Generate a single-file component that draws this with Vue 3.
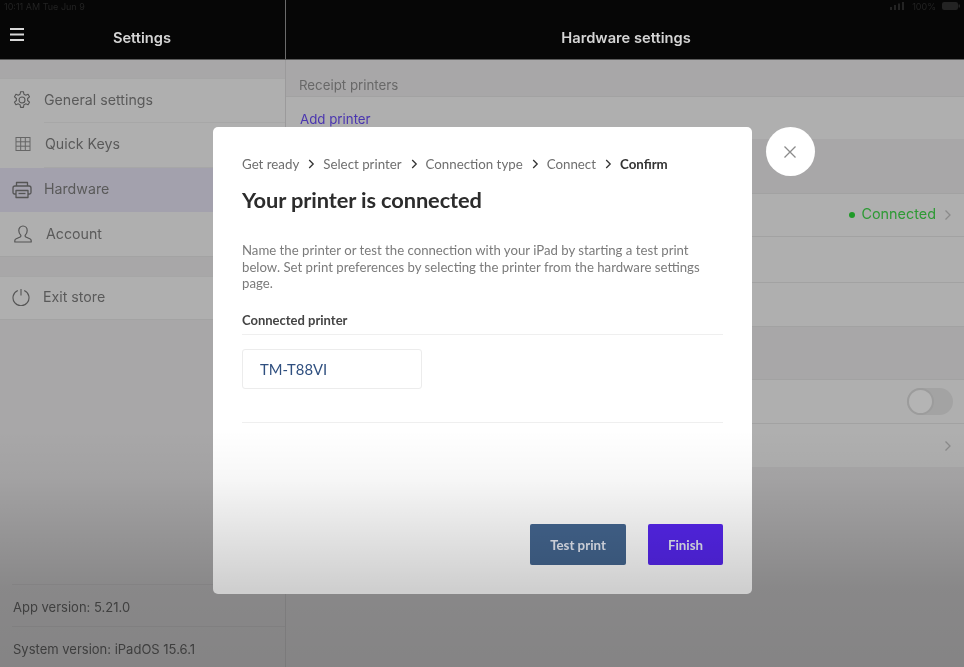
<script setup>
const steps = ['Get ready', 'Select printer', 'Connection type', 'Connect']
</script>

<template>
  <div class="screen">
    <header class="top">
      <div class="top-left">
        <span class="status status-left">10:11 AM Tue Jun 9</span>
        <svg class="burger" width="16" height="16" viewBox="0 0 16 16"><path d="M1 2h14M1 7.500h14M1 13h14" stroke="#d8d8d8" stroke-width="2"/></svg>
        <span class="top-title">Settings</span>
      </div>
      <div class="top-right">
        <div class="status status-right">
          <svg width="16" height="8" viewBox="0 0 16 8" fill="#232323"><rect x="0" y="5" width="2" height="3"/><rect x="4" y="3" width="2" height="5"/><rect x="8" y="1.500" width="2" height="6.500"/><rect x="12" y="0" width="2" height="8"/></svg>
          <span>100%</span>
          <svg width="18" height="8" viewBox="0 0 18 8" fill="#232323"><rect width="16" height="8" rx="2"/><rect x="16.500" y="2.500" width="1.500" height="3"/></svg>
        </div>
        <span class="top-title">Hardware settings</span>
      </div>
    </header>

    <div class="body">
      <aside class="side">
        <div class="group first">
          <div class="nav gen">
            <svg class="ic" width="20" height="20" viewBox="0 0 24 24" fill="none" stroke="#555" stroke-width="1.3" stroke-linejoin="round"><circle cx="12" cy="12" r="3.6"/><path d="M10.300 2h3.400l.6 3a7.500 7.500 0 0 1 2.100 1.200l2.900-1 1.700 3-2.300 2a7.500 7.500 0 0 1 0 2.400l2.300 2-1.700 3-2.900-1a7.500 7.500 0 0 1-2.100 1.200l-.6 3h-3.400l-.6-3a7.500 7.500 0 0 1-2.100-1.200l-2.900 1-1.700-3 2.300-2a7.500 7.500 0 0 1 0-2.400l-2.300-2 1.700-3 2.900 1a7.500 7.500 0 0 1 2.100-1.200z"/></svg>
            <span class="nav-label">General settings</span>
          </div>
          <div class="nav keys">
            <svg class="ic" width="16" height="16" viewBox="0 0 16 16" fill="none" stroke="#666" stroke-width="1"><rect x="1" y="1.500" width="14" height="13"/><path d="M5.700 1.500v13M10.300 1.500v13M1 5.800h14M1 10.200h14"/></svg>
            <span class="nav-label">Quick Keys</span>
          </div>
          <div class="nav hard">
            <svg class="ic" width="20" height="18" viewBox="0 0 20 18" fill="none" stroke="#555" stroke-width="1.300" stroke-linejoin="round"><path d="M4.500 5V1.500h11V5"/><path d="M4 13H2.500A1.500 1.500 0 0 1 1 11.500V7a2 2 0 0 1 2-2h14a2 2 0 0 1 2 2v4.500a1.500 1.500 0 0 1-1.500 1.500H16"/><rect x="4" y="9.500" width="12" height="7"/><path d="M6.500 12.500h7"/></svg>
            <span class="nav-label">Hardware</span>
          </div>
          <div class="nav acc">
            <svg class="ic" width="18" height="19" viewBox="0 0 18 19" fill="none" stroke="#555" stroke-width="1.200" stroke-linejoin="round"><path d="M9 1.500c-2.600 0-4.200 2-4.200 4.500 0 2 .9 3.600 1.900 4.700.4.500.2 1.500-.5 1.800l-4 1.700c-.9.400-1.400 1.200-1.400 2.100v1.200h16.400v-1.200c0-.9-.5-1.700-1.400-2.100l-4-1.700c-.7-.3-.9-1.300-.5-1.800 1-1.100 1.900-2.700 1.900-4.700 0-2.500-1.600-4.500-4.200-4.500z"/></svg>
            <span class="nav-label">Account</span>
          </div>
        </div>
        <div class="group">
          <div class="nav exit">
            <svg class="ic" width="18" height="18" viewBox="0 0 18 18" fill="none" stroke="#555" stroke-width="1.100"><path d="M5.800 2.400a8 8 0 1 0 6.400 0"/><path d="M9 1v6.500"/></svg>
            <span class="nav-label">Exit store</span>
          </div>
        </div>
        <div class="versions">
          <div class="version">App version: 5.21.0</div>
          <div class="version">System version: iPadOS 15.6.1</div>
        </div>
      </aside>

      <main class="main">
        <div class="section-label">Receipt printers</div>
        <div class="row add"><span class="link">Add printer</span></div>
        <div class="spacer-a"></div>
        <div class="row tall-a right">
          <span class="connected"><i class="dot"></i>Connected</span>
          <svg class="chev" width="8" height="12" viewBox="0 0 8 12" fill="none" stroke="#8a8a8a" stroke-width="1.300"><path d="M1.500 1.500 6 6l-4.500 4.500"/></svg>
        </div>
        <div class="row tall-b"></div>
        <div class="row tall-c"></div>
        <div class="spacer-b"></div>
        <div class="row tall-d right">
          <span class="toggle"><i class="knob"></i></span>
        </div>
        <div class="row tall-e right">
          <svg class="chev" width="8" height="12" viewBox="0 0 8 12" fill="none" stroke="#8a8a8a" stroke-width="1.300"><path d="M1.500 1.500 6 6l-4.500 4.500"/></svg>
        </div>
      </main>
    </div>

    <section class="modal">
      <nav class="crumbs">
        <template v-for="s in steps" :key="s">
          <span>{{ s }}</span>
          <svg width="7" height="10" viewBox="0 0 7 10" fill="none" stroke="#333" stroke-width="1.300"><path d="M1.200 1 5.200 5l-4 4"/></svg>
        </template>
        <span class="current">Confirm</span>
      </nav>
      <h1>Your printer is connected</h1>
      <p>Name the printer or test the connection with your iPad by starting a test print below. Set print preferences by selecting the printer from the hardware settings page.</p>
      <div class="field-label">Connected printer</div>
      <div class="field-wrap">
        <div class="field">TM-T88VI</div>
      </div>
      <div class="actions">
        <button class="btn secondary">Test print</button>
        <button class="btn primary">Finish</button>
      </div>
    </section>

    <button class="close" aria-label="Close">
      <svg width="14" height="14" viewBox="0 0 14 14" fill="none" stroke="#8b8b8b" stroke-width="1.300"><path d="M1.500 1.500l11 11M12.500 1.500l-11 11"/></svg>
    </button>

    <div class="shade"></div>
  </div>
</template>

<style>
html, body { margin: 0; background: #a8a7a8; }
</style>

<style scoped>
.screen {
  position: relative;
  width: 964px;
  height: 667px;
  overflow: hidden;
  background: #a8a7a8;
  font-family: "Inter", "Liberation Sans", sans-serif;
  filter: blur(0.35px);
}
.top { display: flex; height: 60px; background: #060606; border-bottom: 1px solid #5a5a5a; box-sizing: border-box; }
.top-left { position: relative; width: 285px; height: 100%; display: flex; align-items: center; justify-content: center; border-right: 1px solid #6a6a6a; box-sizing: content-box; }
.top-right { position: relative; flex: 1; height: 100%; display: flex; align-items: center; justify-content: center; }
.top-title { margin-top: 17px; font-size: 14.700px; font-weight: 600; color: #d4d4d4; }
.top-left .top-title { margin-right: 1px; }
.top-right .top-title { margin-left: 2px; }
.burger { position: absolute; left: 9px; top: 27px; }
.status { position: absolute; top: 1px; font-size: 9px; color: #232323; filter: blur(0.6px); }
.status-left { left: 4px; }
.status-right { right: 4px; display: flex; align-items: center; gap: 6px; height: 10px; }

.body { display: flex; height: 607px; }
.side { width: 285px; display: flex; flex-direction: column; border-right: 1px solid #9b9a9b; box-sizing: content-box; }
.group { background: #afafaf; margin-top: 19px; border-top: 1px solid #a6a6a6; border-bottom: 1px solid #a3a3a3; }
.group.first { margin-top: 18px; }
.nav { position: relative; display: flex; align-items: center; height: 44.250px; color: #5a5a5a; }
.ic { position: absolute; top: 50%; transform: translateY(-50%); }
.nav-label { font-size: 14.200px; }
.gen .ic { left: 12px; top: calc(50% - 1px); } .gen .nav-label { margin: 0 0 4px 44px; }
.keys .ic { left: 15px; top: calc(50% - 1px); } .keys .nav-label { margin: 0 0 4px 45px; }
.hard .ic { left: 12px; } .hard .nav-label { margin: 0 0 2px 44px; }
.acc .ic { left: 14px; } .acc .nav-label { margin-left: 46px; }
.exit { height: 41.500px; }
.exit .ic { left: 12px; top: calc(50% - 1px); } .exit .nav-label { margin: 0 0 2px 43px; }
.gen::after, .keys::after { content: ""; position: absolute; left: 44px; right: 0; bottom: 0; height: 1px; background: #a7a7a7; }
.hard { background: #a3a1ad; }

.versions { margin-top: auto; margin-left: 12px; height: 83px; display: flex; flex-direction: column; }
.version { flex: 1; display: flex; align-items: center; padding: 4px 0 0 1px; border-top: 1px solid #a09fa0; font-size: 13px; color: #4e4e4e; }

.main { flex: 1; }
.section-label { height: 36px; padding: 17px 0 0 13px; box-sizing: border-box; font-size: 13.300px; color: #686868; }
.row { background: #afafaf; border-top: 1px solid #a2a2a2; box-sizing: border-box; }
.add { height: 43px; padding: 11px 0 0 14px; }
.link { font-size: 13.300px; color: #4a35b0; }
.spacer-a { height: 54px; background: #a8a7a8; }
.tall-a { height: 43px; }
.tall-b { height: 46px; }
.tall-c { height: 44px; }
.spacer-b { height: 53px; background: #a8a7a8; border-top: 1px solid #a2a2a2; box-sizing: border-box; }
.tall-d { height: 44px; }
.tall-e { height: 44px; }
.right { display: flex; align-items: center; justify-content: flex-end; padding-right: 12px; }
.tall-d.right { padding-right: 11px; }
.connected { display: flex; align-items: center; font-size: 14.400px; color: #2e9a35; margin: 0 8px 3px 0; }
.dot { width: 6px; height: 6px; border-radius: 50%; background: #1f9a28; margin: 2px 6px 0 0; }
.toggle { position: relative; width: 46px; height: 27px; border-radius: 14px; background: #a3a3a3; }
.knob { position: absolute; left: 0; top: 0; width: 23px; height: 23px; border: 2px solid #9c9c9c; border-radius: 50%; background: #b4b4b4; }

.modal {
  position: absolute; left: 213px; top: 127px;
  width: 539px; height: 467px;
  box-sizing: border-box;
  padding: 28px 29px 0;
  background: #fff;
  border-radius: 5px;
  font-family: "Lato", sans-serif;
}
.crumbs { display: flex; align-items: center; height: 17px; font-size: 13.300px; color: #6f6f6f; }
.crumbs svg { margin: 0 8px 0 9px; }
.current { color: #333; font-weight: 700; }
h1 { margin: 13px 0 0; font-size: 21.800px; line-height: 29px; font-weight: 700; color: #2c2c2c; letter-spacing: -0.1px; }
p { margin: 28px 0 0; font-size: 13.200px; line-height: 16.500px; color: #7b7b7b; }
.field-label { margin-top: 21px; padding-bottom: 6px; height: 15px; line-height: 15px; font-size: 13px; font-weight: 700; color: #444; border-bottom: 1px solid #efefef; }
.field-wrap { padding: 14px 0 33px; border-bottom: 1px solid #efefef; }
.field { width: 180px; height: 40px; box-sizing: border-box; padding-left: 17px; line-height: 39px; font-size: 14.800px; color: #2f4f7f; border: 1px solid #ececec; border-radius: 3px; }
.actions { display: flex; justify-content: flex-end; gap: 22px; margin-top: 101px; }
.btn { height: 41px; border: 0; border-radius: 2px; font-family: "Lato", sans-serif; font-size: 13.300px; font-weight: 700; color: #e6eaf4; padding-top: 2px; }
.secondary { width: 96px; background: #446690; }
.primary { width: 75px; background: #5626ee; }

.close { position: absolute; left: 766px; top: 127px; width: 49px; height: 49px; padding: 0; border: 0; border-radius: 50%; background: #fff; display: flex; align-items: center; justify-content: center; }
.close svg { margin-left: -2px; }

.shade {
  position: absolute; left: 0; right: 0; top: 430px; bottom: 0;
  pointer-events: none;
  background: linear-gradient(to bottom, rgba(0,0,0,0), rgba(0,0,0,.03) 20%, rgba(0,0,0,.19) 67%, rgba(0,0,0,.21));
}
</style>
